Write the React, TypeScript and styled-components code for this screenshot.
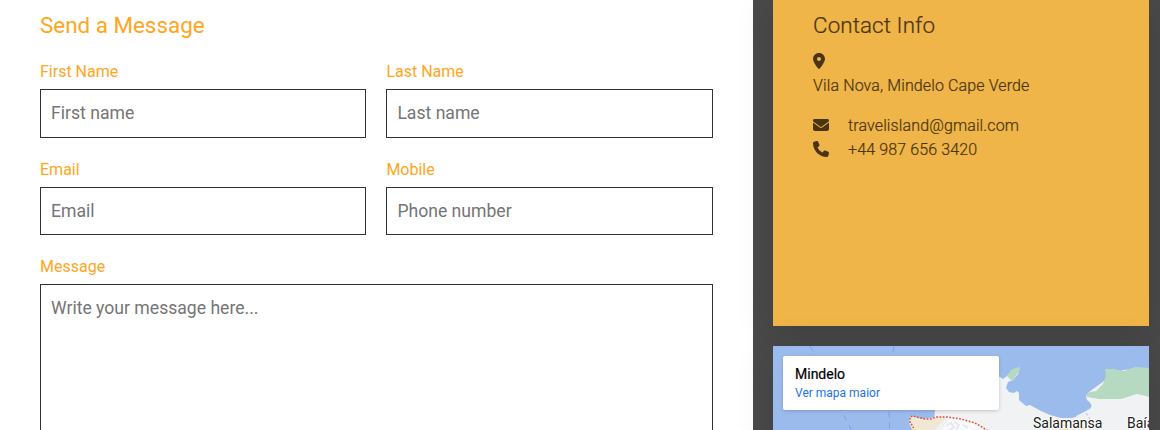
import React from "react";
import styled, { createGlobalStyle } from "styled-components";
import { FaEnvelope, FaLocationDot, FaPhone } from "react-icons/fa6";

const GlobalStyle = createGlobalStyle`
  *, *::before, *::after { box-sizing: border-box; }
  body {
    margin: 0;
    overflow: hidden;
    background: #4a4a4a;
    font-family: Roboto, "Liberation Sans", sans-serif;
  }
`;

const Page = styled.main`
  display: grid;
  grid-template-columns: 753px 376px;
  column-gap: 20px;
  height: 430px;
  overflow: hidden;
`;

const FormPanel = styled.section`
  height: 460px;
  padding: 11px 40px 0;
  background: #fff;
`;

const Heading = styled.h2<{ $light?: boolean }>`
  margin: 0;
  font-size: 22.4px;
  line-height: 28px;
  letter-spacing: ${(p) => (p.$light ? "0.1px" : "0")};
  font-weight: ${(p) => (p.$light ? 300 : 400)};
  -webkit-text-stroke: ${(p) => (p.$light ? "0.2px" : "0")};
  color: ${(p) => (p.$light ? "#4a3413" : "#ffa620")};
`;

const Form = styled.form`
  display: grid;
  grid-template-columns: 326.4px 1fr;
  gap: 20px;
  margin-top: 21.2px;
`;

const Field = styled.label<{ $wide?: boolean }>`
  display: flex;
  flex-direction: column;
  grid-column: ${(p) => (p.$wide ? "1 / -1" : "auto")};
`;

const FieldLabel = styled.span`
  height: 29.1px;
  font-size: 16px;
  line-height: 24px;
  color: #ffa620;
`;

const Input = styled.input`
  width: 100%;
  height: 48.4px;
  padding: 10px;
  border: 1px solid #333;
  border-radius: 0;
  background: #fff;
  font: 400 17.6px Roboto, "Liberation Sans", sans-serif;
  &::placeholder { color: #757575; opacity: 1; }
`;

const MessageBox = styled(Input).attrs({ as: "textarea" })`
  height: 200px;
  padding: 13px 10px;
  resize: none;
`;

const Sidebar = styled.aside`
  position: relative;
  display: flex;
  flex-direction: column;
  gap: 20px;
`;

const ContactCard = styled.section`
  height: 326px;
  padding: 11px 40px;
  background: #efb548;
  color: #4a3413;
  box-shadow: 0 5px 35px rgba(0, 0, 0, 0.15);
`;

const ContactList = styled.div`
  display: flex;
  flex-direction: column;
  margin-top: 11px;
  font-size: 16px;
  font-weight: 300;
  line-height: 24px;
  letter-spacing: 0.12px;
  -webkit-text-stroke: 0.2px;
`;

const Address = styled.div`
  display: flex;
  flex-direction: column;
  gap: 2px;
  margin-bottom: 16px;
`;

const IconSlot = styled.span<{ $inset?: number }>`
  display: flex;
  align-items: center;
  width: 35px;
  height: 22px;
  font-size: 16px;
  svg { margin-left: ${(p) => -(p.$inset ?? 0)}px; }
`;

const ContactRow = styled.div`
  display: flex;
  height: 24px;
`;

const MapCard = styled.section`
  position: relative;
  height: 300px;
  overflow: hidden;
  background: #9cbbed;
  box-shadow: 0 5px 35px rgba(0, 0, 0, 0.15);
  svg { display: block; }
`;

const PlaceCard = styled.div`
  position: absolute;
  left: 10px;
  top: 10px;
  width: 216px;
  height: 54px;
  padding: 9px 12px;
  border-radius: 2px;
  background: #fff;
  box-shadow: 0 1px 4px -1px rgba(0, 0, 0, 0.3);
`;

const PlaceName = styled.div`
  font-size: 14px;
  font-weight: 400;
  -webkit-text-stroke: 0.2px;
  line-height: 18px;
  color: #000;
`;

const MapLink = styled.div`
  margin-top: 2px;
  font-size: 12px;
  line-height: 16px;
  color: #1a73e8;
`;

const TownLabel = styled.span<{ $x: number }>`
  position: absolute;
  left: ${(p) => p.$x}px;
  top: 68px;
  font-size: 14px;
  line-height: 18px;
  white-space: nowrap;
  color: #202020;
  text-shadow: 1px 0 1px #fff, -1px 0 1px #fff, 0 1px 1px #fff, 0 -1px 1px #fff,
    0 0 2px #fff;
`;

const fields = [
  ["First Name", "First name"],
  ["Last Name", "Last name"],
  ["Email", "Email"],
  ["Mobile", "Phone number"],
];

function IslandMap() {
  return (
    <svg width="376" height="300" viewBox="0 0 376 300" fill="none">
      <path
        d="M37 0L43 11L69 66L82 90M121 0L119 11L116 66L117 90"
        stroke="#75a3ed"
        strokeDasharray="6 5"
      />
      <path
        d="M162 64L220 30L227 31L230 33L234 30L240 26L246 27L240 34L235 36L233 42L236 46L241 47L244 45L246 47V54L253 60L257 59L268 65L277 69L288 72H299L309 69L316 65L319 60L316 55L313 50L316 46L331 35L350 24L376 22V300H140Z"
        fill="#f0f2f4"
      />
      <path
        d="M234 30L238 24L243 22L247 21L246 26L239 35ZM332 23L341 23L351 25L362 21L376 22V51L364 48L349 53H325L314 51L314 48L317 46L323 45L330 38L333 30Z"
        fill="#b6dac1"
      />
      <path
        d="M313 51L314 54L319 58L318 62L313 65L303 70L320 90L376 84V51L364 48L349 53H325Z"
        fill="#f0f2f4"
      />
      <path d="M137 70L150 73L164 71L174 71L166 79L160 88L142 90L136 77Z" fill="#f0e8d5" />
      <path d="M172 78L177 73L190 73L204 79L214 88H168Z" fill="#f9fafc" />
      <path
        d="M173 80L178 77L181 81L176 84M181 76L186 79L183 84M190 79L195 82"
        stroke="#e6e8ed"
        strokeWidth="2"
      />
      <path d="M313 67L319 76" stroke="#9bbdec" strokeDasharray="3 2" />
      <path d="M289 79H294V84H287M309 82H313" stroke="#f3da91" strokeWidth="1.5" />
      <path
        d="M142 92L140 80L137 77L137 71L140 70L152 73L158 73L163 71H174L188 73L202 77L209 81L217 86L226 92"
        stroke="#e84c3d"
        strokeWidth="1.5"
        strokeDasharray="1.7 1.6"
      />
    </svg>
  );
}

export default function App() {
  return (
    <>
      <GlobalStyle />
      <Page>
        <FormPanel>
          <Heading>Send a Message</Heading>
          <Form>
            {fields.map(([label, placeholder]) => (
              <Field key={label}>
                <FieldLabel>{label}</FieldLabel>
                <Input placeholder={placeholder} />
              </Field>
            ))}
            <Field $wide>
              <FieldLabel>Message</FieldLabel>
              <MessageBox placeholder="Write your message here..." />
            </Field>
          </Form>
        </FormPanel>
        <Sidebar>
          <ContactCard>
            <Heading $light>Contact Info</Heading>
            <ContactList>
              <Address>
                <IconSlot $inset={2}><FaLocationDot /></IconSlot>
                <span>Vila Nova, Mindelo Cape Verde</span>
              </Address>
              <ContactRow>
                <IconSlot><FaEnvelope /></IconSlot>
                <span>travelisland@gmail.com</span>
              </ContactRow>
              <ContactRow>
                <IconSlot><FaPhone /></IconSlot>
                <span>+44 987 656 3420</span>
              </ContactRow>
            </ContactList>
          </ContactCard>
          <MapCard>
            <IslandMap />
            <TownLabel $x={260}>Salamansa</TownLabel>
            <TownLabel $x={354}>Baía</TownLabel>
            <PlaceCard>
              <PlaceName>Mindelo</PlaceName>
              <MapLink>Ver mapa maior</MapLink>
            </PlaceCard>
          </MapCard>
        </Sidebar>
      </Page>
    </>
  );
}
